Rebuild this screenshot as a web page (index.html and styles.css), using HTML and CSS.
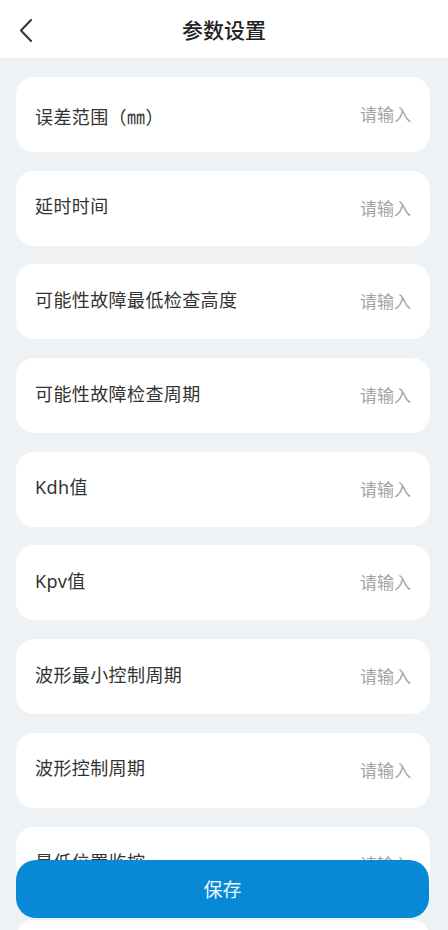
FILE: index.html
```html
<!DOCTYPE html>
<html lang="zh-CN">
<head>
    <meta charset="UTF-8">
    <meta name="viewport" content="width=device-width, initial-scale=1.0">
    <title>参数设置</title>
    <link rel="stylesheet" href="styles.css">
</head>
<body>
    <div class="header">
        <span class="back">
            <svg width="14" height="24" viewBox="0 0 14 24">
                <path d="M12 2 L2 12.5 L12 23" fill="none" stroke="#333" stroke-width="2" stroke-linecap="round" stroke-linejoin="round"/>
            </svg>
        </span>
        <h1>参数设置</h1>
    </div>

    <div class="list">
        <div class="item first"><span class="label">误差范围（㎜）</span><input placeholder="请输入"></div>
        <div class="item"><span class="label">延时时间</span><input placeholder="请输入"></div>
        <div class="item"><span class="label">可能性故障最低检查高度</span><input placeholder="请输入"></div>
        <div class="item"><span class="label">可能性故障检查周期</span><input placeholder="请输入"></div>
        <div class="item"><span class="label">Kdh值</span><input placeholder="请输入"></div>
        <div class="item"><span class="label">Kpv值</span><input placeholder="请输入"></div>
        <div class="item"><span class="label">波形最小控制周期</span><input placeholder="请输入"></div>
        <div class="item"><span class="label">波形控制周期</span><input placeholder="请输入"></div>
        <div class="item"><span class="label">最低位置监控</span><input placeholder="请输入"></div>
        <div class="item"></div>
    </div>

    <button class="save">保存</button>
</body>
</html>
```

FILE: styles.css
```css
body {
    margin: 0;
    font-family: "Noto Sans", "Noto Sans CJK SC", sans-serif;
    background-color: #eef2f5;
    color: #333;
}
.header {
    height: 58px;
    background-color: #fff;
    display: flex;
    align-items: center;
    justify-content: center;
    position: relative;
}
.header h1 {
    margin: 0;
    font-size: 21px;
    font-weight: 500;
    color: #222;
    padding-bottom: 1px;
}
.back {
    position: absolute;
    left: 19px;
    top: 18px;
    line-height: 0;
}
.list {
    display: flex;
    flex-direction: column;
    gap: 18.7px;
    padding: 19px 18px 120px 16px;
}
.item {
    height: 75px;
    flex-shrink: 0;
    box-sizing: border-box;
    background-color: #fff;
    border-radius: 18px;
    display: flex;
    align-items: center;
    padding: 0 19px;
}
.label {
    flex: 1;
    font-size: 18px;
    letter-spacing: 0.4px;
    padding-bottom: 6px;
}
.first .label {
    padding-bottom: 0;
    padding-top: 2px;
}
input {
    width: 80px;
    border: none;
    outline: none;
    text-align: right;
    font-family: inherit;
    font-size: 17px;
    padding: 0;
    background: transparent;
}
input::placeholder {
    color: #a3a3a3;
}
.save {
    position: fixed;
    left: 16px;
    right: 19px;
    bottom: 12px;
    height: 58px;
    border: none;
    border-radius: 20px;
    background-color: #0789d5;
    color: #f2f8fc;
    font-family: inherit;
    font-size: 19px;
}
```
